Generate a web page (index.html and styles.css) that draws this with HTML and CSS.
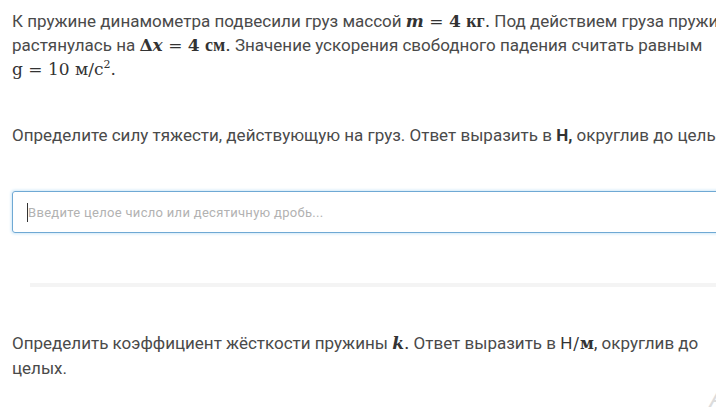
FILE: index.html
```html
<!DOCTYPE html>
<html lang="ru">
<head>
<meta charset="utf-8">
<title>Задача</title>
<link rel="stylesheet" href="styles.css">
</head>
<body>
<main class="task">
  <p class="text cond">К пружине динамометра подвесили груз массой <span class="math"><i class="mi">m</i> <span class="mo">=</span> <b class="mn">4</b> <b class="mu">кг</b>.</span> Под действием груза пружина<br>растянулась на <span class="math"><b class="mn">Δ</b><i class="mi">x</i> <span class="mo">=</span> <b class="mn">4</b> <b class="mu">см</b>.</span> Значение ускорения свободного падения считать равным<br><span class="math"><span class="mr">g</span> <span class="mo">=</span> <span class="mr">10</span> <span class="mr">м/с<sup>2</sup></span>.</span></p>

  <section class="question q1">
    <p class="text">Определите силу тяжести, действующую на груз. Ответ выразить в <b class="unit">Н,</b> округлив до целых.</p>
    <div class="field">
      <span class="caret"></span>
      <span class="placeholder">Введите целое число или десятичную дробь...</span>
    </div>
  </section>

  <div class="sep"></div>

  <section class="question q2">
    <p class="text">Определить коэффициент жёсткости пружины <span class="math"><i class="mi">k</i>.</span> Ответ выразить в <span class="unit-mix">Н<span class="slash">/</span><b>м</b>,</span> округлив до<br>целых.</p>
  </section>

  <span class="mark">A</span>
</main>
</body>
</html>
```

FILE: styles.css
```css
html, body {
  margin: 0;
  padding: 0;
  background: #ffffff;
}

body {
  width: 716px;
  height: 415px;
  overflow: hidden;
  position: relative;
}

.task {
  width: 780px;
  padding: 9px 0 0 12px;
  font-family: Roboto, "Noto Sans", sans-serif;
  color: #4a4a4a;
}

.text {
  margin: 0;
  font-size: 17px;
  line-height: 24px;
  white-space: nowrap;
}

.math {
  font-family: "DejaVu Serif", "Liberation Serif", serif;
  color: #333;
}

.mi {
  font-style: italic;
  font-weight: bold;
}

.mn {
  font-weight: bold;
}

.mo,
.mr {
  font-weight: normal;
}

.mu {
  font-family: "Liberation Serif", serif;
  font-weight: bold;
  font-size: 18px;
}

.math sup {
  font-size: 11px;
  line-height: 0;
}

.unit {
  font-weight: bold;
  color: #333;
}

.unit-mix {
  color: #333;
}

.unit-mix .slash {
  font-family: "DejaVu Serif", serif;
  padding: 0 1px;
}

.unit-mix b {
  font-family: "DejaVu Serif", serif;
  font-size: 16px;
}

.question.q1 {
  margin-top: 42px;
}

.field {
  display: flex;
  align-items: center;
  margin-top: 44px;
  width: 740px;
  height: 40px;
  border: 1px solid #6fa9d4;
  border-radius: 3px;
  box-shadow: 0 0 3px 1px #cfe8f8;
  padding-left: 14px;
}

.caret {
  width: 1px;
  height: 19px;
  background: #333;
}

.placeholder {
  font-size: 13px;
  letter-spacing: 0.3px;
  color: #b2b2b2;
}

.sep {
  margin: 50px 0 0 18px;
  height: 4px;
  background: #f4f4f4;
}

.question.q2 {
  margin-top: 44px;
}

.mark {
  position: absolute;
  right: -10px;
  bottom: 2px;
  font-size: 26px;
  font-style: italic;
  color: #dcdcdc;
}
```
